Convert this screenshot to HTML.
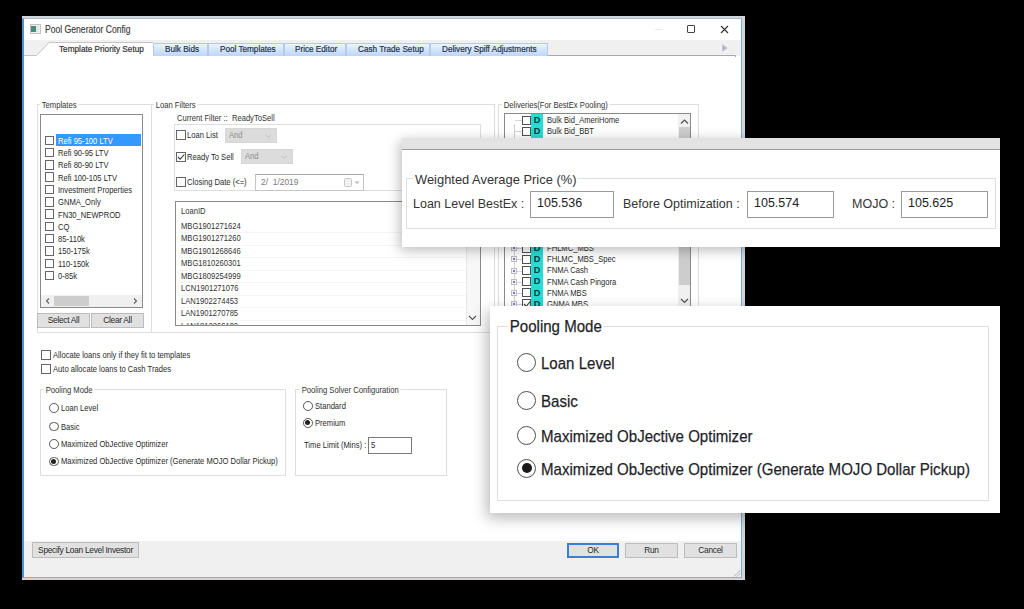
<!DOCTYPE html>
<html><head><meta charset="utf-8">
<style>
*{box-sizing:border-box;margin:0;padding:0}
html,body{width:1024px;height:609px;overflow:hidden;background:#000}
body{position:relative;font-family:"Liberation Sans",sans-serif;color:#222}
.a{position:absolute}
.t{position:absolute;white-space:nowrap;line-height:1}
.s8{font-size:9px;transform:scaleX(0.845);transform-origin:0 0;color:#2a2a2a}
.grp{position:absolute;border:1px solid #dedede}
.lbl{position:absolute;background:#fff;white-space:nowrap;line-height:1;font-size:9px;transform:scaleX(0.85);transform-origin:0 0;color:#333;padding:0 2px}
.cb{position:absolute;width:9px;height:9px;border:1px solid #666;background:#fff}
.rd{position:absolute;border:1px solid #555;border-radius:50%;background:#fff}
.btn{position:absolute;background:#e1e1e1;border:1px solid #bcbcbc;font-size:8.4px;letter-spacing:-0.3px;color:#2a2a2a;text-align:center;white-space:nowrap}
.tab{position:absolute;top:42.5px;height:13.5px;background:linear-gradient(#edf4fd,#d3e4fa 50%,#bcd6f6);border:1px solid #b3cbe9;border-bottom:none;font-size:8.6px;letter-spacing:-0.2px;color:#24324a;-webkit-text-stroke:0.3px #24324a;text-align:center;line-height:11px;white-space:nowrap}
.big{position:absolute;white-space:nowrap;line-height:1;font-size:17px;color:#1f1f2a;transform:scaleX(0.885);transform-origin:0 0;-webkit-text-stroke:0.25px #1f1f2a}
</style></head><body>
<div class="a" style="left:22px;top:16px;width:723px;height:564px;background:#d2d6da"></div>
<div class="a" style="left:22px;top:18px;width:720px;height:560px;background:#fff;border:1px solid #78b0e4;border-top-color:#a4bfd9;border-left-color:#4f92d4;border-left-width:2px"></div>
<div class="a" style="left:29.5px;top:24px;width:11px;height:9.5px;border:1px solid #c0c4c8;background:#eef0ee"></div>
<div class="a" style="left:31px;top:26px;width:4.5px;height:6px;background:#4a8a78"></div>
<div class="a" style="left:36px;top:26px;width:3px;height:6px;background:#dfe8e4"></div>
<div class="t" style="left:45px;top:25.2px;font-size:10.3px;transform:scaleX(0.835);transform-origin:0 0;color:#3a3a3a;-webkit-text-stroke:0.15px #3a3a3a">Pool Generator Config</div>
<div class="a" style="left:655px;top:29px;width:8px;height:1px;background:#e8e8e8"></div>
<div class="a" style="left:687px;top:25px;width:8px;height:7.6px;border:1.1px solid #444;border-radius:1px"></div>
<svg class="a" style="left:720px;top:24.5px" width="9" height="9"><path d="M1 1L8 8M8 1L1 8" stroke="#333" stroke-width="1.1"/></svg>
<div class="a" style="left:24px;top:40px;width:717px;height:16px;background:#f0f0f0"></div>
<svg class="a" style="left:24px;top:40px" width="717" height="17">
  <path d="M0 15.5H12.5L25 2.5H129V16H12Z" fill="#fff"/>
  <path d="M0 15.5H12.5L25 2.5H129" fill="none" stroke="#c4c4c4" stroke-width="1"/>
  <path d="M524 15.5H711.5V17" fill="none" stroke="#a8a8a8" stroke-width="1"/>
  <path d="M698.5 4.8L703.2 8L698.5 11.2Z" fill="#b0b0b8" stroke="#c8c8d0" stroke-width="0.8"/>
</svg>
<div class="t" style="left:59px;top:43.6px;font-size:9.6px;transform:scaleX(0.855);transform-origin:0 0;color:#333;-webkit-text-stroke:0.22px #333">Template Priority Setup</div>
<div class="tab" style="left:153px;width:55px"></div>
<div class="t" style="left:164.8px;top:43.6px;font-size:9.6px;transform:scaleX(0.85);transform-origin:0 0;color:#26344c;-webkit-text-stroke:0.22px #26344c">Bulk Bids</div>
<div class="tab" style="left:208px;width:76px"></div>
<div class="t" style="left:219.7px;top:43.6px;font-size:9.6px;transform:scaleX(0.85);transform-origin:0 0;color:#26344c;-webkit-text-stroke:0.22px #26344c">Pool Templates</div>
<div class="tab" style="left:284px;width:62px"></div>
<div class="t" style="left:295.3px;top:43.6px;font-size:9.6px;transform:scaleX(0.85);transform-origin:0 0;color:#26344c;-webkit-text-stroke:0.22px #26344c">Price Editor</div>
<div class="tab" style="left:346px;width:84px"></div>
<div class="t" style="left:357.5px;top:43.6px;font-size:9.6px;transform:scaleX(0.85);transform-origin:0 0;color:#26344c;-webkit-text-stroke:0.22px #26344c">Cash Trade Setup</div>
<div class="tab" style="left:430px;width:118px"></div>
<div class="t" style="left:441.5px;top:43.6px;font-size:9.6px;transform:scaleX(0.85);transform-origin:0 0;color:#26344c;-webkit-text-stroke:0.22px #26344c">Delivery Spiff Adjustments</div>
<div class="grp" style="left:37px;top:104px;width:115px;height:229px"></div>
<div class="lbl" style="left:40px;top:101px">Templates</div>
<div class="a" style="left:40px;top:114px;width:103px;height:194px;border:1px solid #8a8a8a;background:#fff"></div>
<div class="a" style="left:56px;top:134px;width:85px;height:12px;background:#3399ff"></div>
<div class="cb" style="left:44.5px;top:135.5px;width:9.5px;height:9.5px"></div><div class="t s8" style="left:58px;top:136.7px;color:#fff">Refi 95-100 LTV</div>
<div class="cb" style="left:44.5px;top:147.8px;width:9.5px;height:9.5px"></div><div class="t s8" style="left:58px;top:149.0px;color:#2a2a2a">Refi 90-95 LTV</div>
<div class="cb" style="left:44.5px;top:160.1px;width:9.5px;height:9.5px"></div><div class="t s8" style="left:58px;top:161.3px;color:#2a2a2a">Refi 80-90 LTV</div>
<div class="cb" style="left:44.5px;top:172.4px;width:9.5px;height:9.5px"></div><div class="t s8" style="left:58px;top:173.6px;color:#2a2a2a">Refi 100-105 LTV</div>
<div class="cb" style="left:44.5px;top:184.7px;width:9.5px;height:9.5px"></div><div class="t s8" style="left:58px;top:185.9px;color:#2a2a2a">Investment Properties</div>
<div class="cb" style="left:44.5px;top:197.0px;width:9.5px;height:9.5px"></div><div class="t s8" style="left:58px;top:198.2px;color:#2a2a2a">GNMA_Only</div>
<div class="cb" style="left:44.5px;top:209.3px;width:9.5px;height:9.5px"></div><div class="t s8" style="left:58px;top:210.5px;color:#2a2a2a">FN30_NEWPROD</div>
<div class="cb" style="left:44.5px;top:221.6px;width:9.5px;height:9.5px"></div><div class="t s8" style="left:58px;top:222.8px;color:#2a2a2a">CQ</div>
<div class="cb" style="left:44.5px;top:233.9px;width:9.5px;height:9.5px"></div><div class="t s8" style="left:58px;top:235.1px;color:#2a2a2a">85-110k</div>
<div class="cb" style="left:44.5px;top:246.2px;width:9.5px;height:9.5px"></div><div class="t s8" style="left:58px;top:247.4px;color:#2a2a2a">150-175k</div>
<div class="cb" style="left:44.5px;top:258.5px;width:9.5px;height:9.5px"></div><div class="t s8" style="left:58px;top:259.7px;color:#2a2a2a">110-150k</div>
<div class="cb" style="left:44.5px;top:270.8px;width:9.5px;height:9.5px"></div><div class="t s8" style="left:58px;top:272.0px;color:#2a2a2a">0-85k</div>
<div class="a" style="left:41px;top:295px;width:101px;height:12px;background:#f0f0f0"></div>
<div class="a" style="left:54px;top:296px;width:35px;height:10px;background:#cdcdcd"></div>
<svg class="a" style="left:44px;top:297px" width="8" height="8"><path d="M5 1.5L2.5 4L5 6.5" fill="none" stroke="#606060" stroke-width="1.1"/></svg>
<svg class="a" style="left:131px;top:297px" width="8" height="8"><path d="M3 1.5L5.5 4L3 6.5" fill="none" stroke="#606060" stroke-width="1.1"/></svg>
<div class="btn" style="left:37px;top:313px;width:53px;height:15px;line-height:13px">Select All</div>
<div class="btn" style="left:91px;top:313px;width:53px;height:15px;line-height:13px">Clear All</div>
<div class="grp" style="left:151px;top:104px;width:344px;height:229px"></div>
<div class="lbl" style="left:154px;top:101px">Loan Filters</div>
<div class="t s8" style="left:177px;top:114px;color:#333">Current Filter ::&nbsp; ReadyToSell</div>
<div class="a" style="left:174px;top:124px;width:307px;height:67px;border:1px solid #dedede"></div>
<div class="cb" style="left:176px;top:130px;height:10px;width:10px"></div>
<div class="t s8" style="left:187px;top:131px">Loan List</div>
<div class="a" style="left:225px;top:128px;width:52px;height:15px;background:#dcdcdc;border:1px solid #d6d6d6"></div>
<div class="t s8" style="left:229px;top:131px;color:#8e8e8e">And</div>
<svg class="a" style="left:265px;top:134px" width="7" height="5"><path d="M1 1L3.5 3.5L6 1" fill="none" stroke="#c0c0c0" stroke-width="1"/></svg>
<div class="cb" style="left:176px;top:152px;height:10px;width:10px"></div>
<svg class="a" style="left:176px;top:152px" width="10" height="10"><path d="M2 5L4.2 7.3L8.3 2.5" fill="none" stroke="#333" stroke-width="1.1"/></svg>
<div class="t s8" style="left:187px;top:153px">Ready To Sell</div>
<div class="a" style="left:241px;top:149px;width:52px;height:15px;background:#dcdcdc;border:1px solid #d6d6d6"></div>
<div class="t s8" style="left:245px;top:152px;color:#8e8e8e">And</div>
<svg class="a" style="left:281px;top:155px" width="7" height="5"><path d="M1 1L3.5 3.5L6 1" fill="none" stroke="#c0c0c0" stroke-width="1"/></svg>
<div class="cb" style="left:176px;top:177px;height:10px;width:10px"></div>
<div class="t s8" style="left:187px;top:178px">Closing Date (&lt;=)</div>
<div class="a" style="left:255px;top:173.5px;width:109px;height:17.5px;border:1px solid #c4c4c4;border-top-color:#a8a8a8;background:#fff"></div>
<div class="t" style="left:261px;top:177px;font-size:9.8px;transform:scaleX(0.86);transform-origin:0 0;color:#7a7a7a">2/&nbsp;&nbsp;1/2019</div>
<div class="a" style="left:344px;top:178px;width:8px;height:8.5px;border:1px solid #c8c8c8;border-radius:1.5px;background:#f2f2f2"></div>
<svg class="a" style="left:353.5px;top:181px" width="6" height="4"><path d="M0.5 0.5L3 3L5.5 0.5Z" fill="#b8b8b8"/></svg>
<div class="a" style="left:175px;top:201px;width:306px;height:125px;border:1px solid #8a8a8a;background:#fff;overflow:hidden"><div class="t s8" style="left:5px;top:5.2px;color:#333">LoanID</div><div class="t s8" style="left:5px;top:19.7px;color:#333">MBG1901271624</div><div class="a" style="left:3px;top:30.2px;width:287px;height:1px;background:#f5f5f5"></div><div class="t s8" style="left:5px;top:32.2px;color:#333">MBG1901271260</div><div class="a" style="left:3px;top:42.7px;width:287px;height:1px;background:#f5f5f5"></div><div class="t s8" style="left:5px;top:44.7px;color:#333">MBG1901268646</div><div class="a" style="left:3px;top:55.2px;width:287px;height:1px;background:#f5f5f5"></div><div class="t s8" style="left:5px;top:57.2px;color:#333">MBG1810260301</div><div class="a" style="left:3px;top:67.7px;width:287px;height:1px;background:#f5f5f5"></div><div class="t s8" style="left:5px;top:69.7px;color:#333">MBG1809254999</div><div class="a" style="left:3px;top:80.2px;width:287px;height:1px;background:#f5f5f5"></div><div class="t s8" style="left:5px;top:82.2px;color:#333">LCN1901271076</div><div class="a" style="left:3px;top:92.7px;width:287px;height:1px;background:#f5f5f5"></div><div class="t s8" style="left:5px;top:94.7px;color:#333">LAN1902274453</div><div class="a" style="left:3px;top:105.2px;width:287px;height:1px;background:#f5f5f5"></div><div class="t s8" style="left:5px;top:107.2px;color:#333">LAN1901270785</div><div class="a" style="left:3px;top:117.7px;width:287px;height:1px;background:#f5f5f5"></div><div class="t s8" style="left:5px;top:119.7px;color:#333">LAN1812266102</div><div class="a" style="left:3px;top:130.2px;width:287px;height:1px;background:#f5f5f5"></div><div class="a" style="left:290px;top:0;width:14px;height:124px;background:#f7f7f7;border-left:1px solid #e6e6e6"></div><svg class="a" style="left:292px;top:113px" width="9" height="6"><path d="M1 1L4.5 4.5L8 1" fill="none" stroke="#505050" stroke-width="1.1"/></svg></div>
<div class="grp" style="left:498px;top:104px;width:201px;height:230px"></div>
<div class="lbl" style="left:502px;top:101px">Deliveries(For BestEx Pooling)</div>
<div class="a" style="left:504px;top:112.5px;width:187px;height:194px;border:1px solid #8a8a8a;background:#fff;overflow:hidden"><div class="a" style="left:26px;top:0px;width:12px;height:200px;background:#26dcd4"></div><div class="a" style="left:9px;top:10px;width:1px;height:190px;background:#d0d0d0"></div><div class="a" style="left:10px;top:6.7px;width:7px;height:1px;background:#d4d4d4"></div><div class="a" style="left:16.6px;top:2.1px;width:9.4px;height:9.2px;border:1px solid #505050;background:#fff"></div><div class="t" style="left:26px;top:2.5px;width:12px;text-align:center;font-weight:bold;font-size:9.2px;color:#083838">D</div><div class="t s8" style="left:42px;top:2.6px;color:#2a2a2a">Bulk Bid_AmeriHome</div><div class="a" style="left:10px;top:17.7px;width:7px;height:1px;background:#d4d4d4"></div><div class="a" style="left:16.6px;top:13.1px;width:9.4px;height:9.2px;border:1px solid #505050;background:#fff"></div><div class="t" style="left:26px;top:13.5px;width:12px;text-align:center;font-weight:bold;font-size:9.2px;color:#083838">D</div><div class="t s8" style="left:42px;top:13.6px;color:#2a2a2a">Bulk Bid_BBT</div><div class="a" style="left:10px;top:134.7px;width:7px;height:1px;background:#d4d4d4"></div><div class="a" style="left:6px;top:131.7px;width:6px;height:6px;border:1px solid #bcbcc4;background:#f4f2fa"></div><div class="a" style="left:8px;top:133.7px;width:2px;height:2px;background:#8078b8"></div><div class="a" style="left:16.6px;top:130.1px;width:9.4px;height:9.2px;border:1px solid #505050;background:#fff"></div><div class="t" style="left:26px;top:130.5px;width:12px;text-align:center;font-weight:bold;font-size:9.2px;color:#083838">D</div><div class="t s8" style="left:42px;top:130.6px;color:#2a2a2a">FHLMC_MBS</div><div class="a" style="left:10px;top:145.8px;width:7px;height:1px;background:#d4d4d4"></div><div class="a" style="left:6px;top:142.8px;width:6px;height:6px;border:1px solid #bcbcc4;background:#f4f2fa"></div><div class="a" style="left:8px;top:144.8px;width:2px;height:2px;background:#8078b8"></div><div class="a" style="left:16.6px;top:141.2px;width:9.4px;height:9.2px;border:1px solid #505050;background:#fff"></div><div class="t" style="left:26px;top:141.6px;width:12px;text-align:center;font-weight:bold;font-size:9.2px;color:#083838">D</div><div class="t s8" style="left:42px;top:141.7px;color:#2a2a2a">FHLMC_MBS_Spec</div><div class="a" style="left:10px;top:157.0px;width:7px;height:1px;background:#d4d4d4"></div><div class="a" style="left:6px;top:154.0px;width:6px;height:6px;border:1px solid #bcbcc4;background:#f4f2fa"></div><div class="a" style="left:8px;top:156.0px;width:2px;height:2px;background:#8078b8"></div><div class="a" style="left:16.6px;top:152.4px;width:9.4px;height:9.2px;border:1px solid #505050;background:#fff"></div><div class="t" style="left:26px;top:152.8px;width:12px;text-align:center;font-weight:bold;font-size:9.2px;color:#083838">D</div><div class="t s8" style="left:42px;top:152.9px;color:#2a2a2a">FNMA Cash</div><div class="a" style="left:10px;top:168.1px;width:7px;height:1px;background:#d4d4d4"></div><div class="a" style="left:6px;top:165.1px;width:6px;height:6px;border:1px solid #bcbcc4;background:#f4f2fa"></div><div class="a" style="left:8px;top:167.1px;width:2px;height:2px;background:#8078b8"></div><div class="a" style="left:16.6px;top:163.5px;width:9.4px;height:9.2px;border:1px solid #505050;background:#fff"></div><div class="t" style="left:26px;top:163.9px;width:12px;text-align:center;font-weight:bold;font-size:9.2px;color:#083838">D</div><div class="t s8" style="left:42px;top:164.0px;color:#2a2a2a">FNMA Cash Pingora</div><div class="a" style="left:10px;top:179.3px;width:7px;height:1px;background:#d4d4d4"></div><div class="a" style="left:6px;top:176.3px;width:6px;height:6px;border:1px solid #bcbcc4;background:#f4f2fa"></div><div class="a" style="left:8px;top:178.3px;width:2px;height:2px;background:#8078b8"></div><div class="a" style="left:16.6px;top:174.7px;width:9.4px;height:9.2px;border:1px solid #505050;background:#fff"></div><div class="t" style="left:26px;top:175.1px;width:12px;text-align:center;font-weight:bold;font-size:9.2px;color:#083838">D</div><div class="t s8" style="left:42px;top:175.2px;color:#2a2a2a">FNMA MBS</div><div class="a" style="left:10px;top:190.4px;width:7px;height:1px;background:#d4d4d4"></div><div class="a" style="left:6px;top:187.4px;width:6px;height:6px;border:1px solid #bcbcc4;background:#f4f2fa"></div><div class="a" style="left:8px;top:189.4px;width:2px;height:2px;background:#8078b8"></div><div class="a" style="left:16.6px;top:185.8px;width:9.4px;height:9.2px;border:1px solid #505050;background:#fff"></div><svg class="a" style="left:16.6px;top:185.8px" width="10" height="10"><path d="M2 5L4.2 7.3L8.3 2.5" fill="none" stroke="#333" stroke-width="1.1"/></svg><div class="t" style="left:26px;top:186.2px;width:12px;text-align:center;font-weight:bold;font-size:9.2px;color:#083838">D</div><div class="t s8" style="left:42px;top:186.3px;color:#2a2a2a">GNMA MBS</div><div class="a" style="left:173px;top:0;width:13px;height:194px;background:#f0f0f0"></div><div class="a" style="left:173.5px;top:13.5px;width:11px;height:157.5px;background:#cdcdcd"></div><svg class="a" style="left:175px;top:5.5px" width="9" height="6"><path d="M1 4.5L4.5 1L8 4.5" fill="none" stroke="#505050" stroke-width="1.2"/></svg><svg class="a" style="left:175px;top:184.5px" width="9" height="6"><path d="M1 1L4.5 4.5L8 1" fill="none" stroke="#505050" stroke-width="1.2"/></svg></div>
<div class="cb" style="left:41px;top:350px;width:10px;height:10px"></div>
<div class="t s8" style="left:53px;top:351px">Allocate loans only if they fit to templates</div>
<div class="cb" style="left:41px;top:364px;width:10px;height:10px"></div>
<div class="t s8" style="left:53px;top:365px">Auto allocate loans to Cash Trades</div>
<div class="grp" style="left:40px;top:389px;width:246px;height:87px"></div>
<div class="lbl" style="left:44px;top:386px">Pooling Mode</div>
<div class="rd" style="left:49px;top:403.1px;width:9.8px;height:9.8px"></div>
<div class="t s8" style="left:61px;top:404.0px">Loan Level</div>
<div class="rd" style="left:49px;top:421.6px;width:9.8px;height:9.8px"></div>
<div class="t s8" style="left:61px;top:422.5px">Basic</div>
<div class="rd" style="left:49px;top:438.8px;width:9.8px;height:9.8px"></div>
<div class="t s8" style="left:61px;top:439.7px">Maximized ObJective Optimizer</div>
<div class="rd" style="left:49px;top:456.5px;width:9.8px;height:9.8px"></div>
<div class="a" style="left:51.4px;top:458.9px;width:5px;height:5px;border-radius:50%;background:#222"></div>
<div class="t s8" style="left:61px;top:457.4px">Maximized ObJective Optimizer (Generate MOJO Dollar Pickup)</div>
<div class="grp" style="left:295px;top:389px;width:152px;height:87px"></div>
<div class="lbl" style="left:300px;top:386px">Pooling Solver Configuration</div>
<div class="rd" style="left:303px;top:401.4px;width:9.8px;height:9.8px"></div>
<div class="t s8" style="left:315px;top:402.3px">Standard</div>
<div class="rd" style="left:303px;top:418.0px;width:9.8px;height:9.8px"></div>
<div class="a" style="left:305.4px;top:420.4px;width:5px;height:5px;border-radius:50%;background:#222"></div>
<div class="t s8" style="left:315px;top:418.9px">Premium</div>
<div class="t s8" style="left:304px;top:441px">Time Limit (Mins) :</div>
<div class="a" style="left:368px;top:437px;width:44px;height:17px;border:1px solid #7a7a7a;background:#fff"></div>
<div class="t s8" style="left:371px;top:441px">5</div>
<div class="a" style="left:24px;top:541px;width:717px;height:36px;background:#f0f0f0"></div>
<div class="btn" style="left:32px;top:542px;width:107px;height:16px;line-height:14px">Specify Loan Level Investor</div>
<div class="btn" style="left:567px;top:543px;width:52px;height:15px;line-height:11px;border:2px solid #3c7fd0">OK</div>
<div class="btn" style="left:625px;top:543px;width:53px;height:15px;line-height:13px">Run</div>
<div class="btn" style="left:684px;top:543px;width:53px;height:15px;line-height:13px">Cancel</div>
<svg class="a" style="left:733px;top:569px" width="8" height="8"><path d="M7.5 1L1 7.5M7.5 4L4 7.5" stroke="#a0a0a0" stroke-width="0.8"/></svg>
<div class="a" style="left:402px;top:138px;width:598px;height:109px;background:#fff;box-shadow:-2px 3px 12px rgba(0,0,0,0.28)"><div class="a" style="left:0;top:0;width:598px;height:12px;background:#e3e3e3;border-bottom:1px solid #9a9a9a"></div></div>
<div class="a" style="left:406px;top:178px;width:590px;height:51px;border:1px solid #dedede"></div>
<div class="t" style="left:413px;top:173.5px;font-size:12.9px;color:#333;background:#fff;padding:0 2px">Weighted Average Price (%)</div>
<div class="t" style="left:413px;top:197.8px;font-size:12.5px;color:#333">Loan Level BestEx :</div>
<div class="a" style="left:530px;top:191px;width:84px;height:27px;border:1px solid #9a9a9a;background:#fff"></div>
<div class="t" style="left:537px;top:197px;font-size:12.5px;color:#222">105.536</div>
<div class="t" style="left:623px;top:197.8px;font-size:12.5px;color:#333">Before Optimization :</div>
<div class="a" style="left:747px;top:191px;width:87px;height:27px;border:1px solid #9a9a9a;background:#fff"></div>
<div class="t" style="left:754px;top:197px;font-size:12.5px;color:#222">105.574</div>
<div class="t" style="left:852px;top:197.8px;font-size:12.5px;color:#333">MOJO :</div>
<div class="a" style="left:901px;top:191px;width:87px;height:27px;border:1px solid #9a9a9a;background:#fff"></div>
<div class="t" style="left:908px;top:197px;font-size:12.5px;color:#222">105.625</div>
<div class="a" style="left:490px;top:306px;width:510px;height:207px;background:#fff;box-shadow:-3px 5px 14px rgba(0,0,0,0.28)"></div>
<div class="a" style="left:497px;top:326px;width:492px;height:175px;border:1px solid #dedede"></div>
<div class="big" style="left:508px;top:318px;background:#fff;padding:0 2px">Pooling Mode</div>
<div class="rd" style="left:517px;top:353.3px;width:19px;height:19px;border-color:#505050;border-width:1.8px"></div>
<div class="big" style="left:541px;top:355.3px">Loan Level</div>
<div class="rd" style="left:517px;top:390.9px;width:19px;height:19px;border-color:#505050;border-width:1.8px"></div>
<div class="big" style="left:541px;top:392.9px">Basic</div>
<div class="rd" style="left:517px;top:426.0px;width:19px;height:19px;border-color:#505050;border-width:1.8px"></div>
<div class="big" style="left:541px;top:428.0px">Maximized ObJective Optimizer</div>
<div class="rd" style="left:517px;top:458.5px;width:19px;height:19px;border-color:#505050;border-width:1.8px"></div>
<div class="a" style="left:521.5px;top:463.0px;width:10px;height:10px;border-radius:50%;background:#1a1a1a"></div>
<div class="big" style="left:541px;top:460.5px">Maximized ObJective Optimizer (Generate MOJO Dollar Pickup)</div>
</body></html>
